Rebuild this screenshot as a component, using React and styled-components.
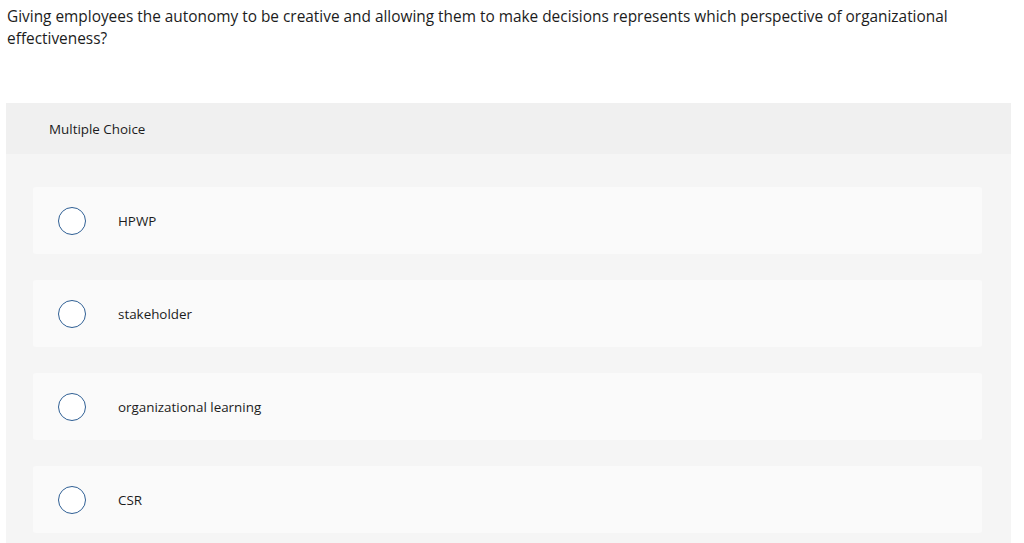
import React from "react";
import styled, { createGlobalStyle } from "styled-components";

const Global = createGlobalStyle`
  html, body { margin: 0; padding: 0; background: #ffffff; }
  body { font-family: "Open Sans", "Lato", Arial, sans-serif; color: #1c1c1c; }
`;

const Page = styled.div`
  padding: 6px 13px 0 6px;
  display: flex;
  flex-direction: column;
`;

const Question = styled.p`
  margin: 0 0 0 1px;
  font-size: 15.4px;
  line-height: 22px;
  color: #1c1c1c;
  max-width: 990px;
`;

const Panel = styled.section`
  margin-top: 53px;
  background: #f5f5f5;
  padding-bottom: 10px;
`;

const PanelHeader = styled.header`
  background: #f0f0f0;
  height: 51px;
  display: flex;
  align-items: center;
  padding-left: 43px;
  font-size: 13.4px;
  color: #1c1c1c;
`;

const Choices = styled.div`
  display: flex;
  flex-direction: column;
  gap: 26px;
  padding: 33px 29px 0 27px;
`;

const Choice = styled.label`
  display: flex;
  align-items: center;
  height: 67px;
  background: #fafafa;
  border-radius: 3px;
  padding-left: 25px;
  gap: 32px;
  cursor: pointer;
  font-size: 13.4px;
  color: #1c1c1c;
`;

const Radio = styled.span`
  width: 26px;
  height: 26px;
  border-radius: 50%;
  border: 1px solid #2f5f94;
  background: #fff;
  flex-shrink: 0;
`;

const options = ["HPWP", "stakeholder", "organizational learning", "CSR"];

export default function App() {
  return (
    <>
      <Global />
      <Page>
        <Question>
          Giving employees the autonomy to be creative and allowing them to make decisions represents which perspective of organizational effectiveness?
        </Question>
        <Panel>
          <PanelHeader>Multiple Choice</PanelHeader>
          <Choices>
            {options.map((o) => (
              <Choice key={o}>
                <Radio />
                <span>{o}</span>
              </Choice>
            ))}
          </Choices>
        </Panel>
      </Page>
    </>
  );
}
